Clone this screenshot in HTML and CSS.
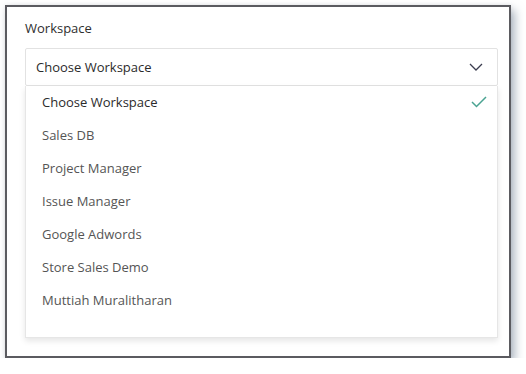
FILE: index.html
```html
<!DOCTYPE html>
<html lang="en">
<head>
    <meta charset="UTF-8">
    <title>Workspace</title>
    <link rel="stylesheet" href="styles.css">
</head>
<body>
    <div class="frame">
        <div class="field-label">Workspace</div>
        <div class="select">
            <span>Choose Workspace</span>
            <svg class="chevron" width="14" height="8" viewBox="0 0 14 8">
                <path d="M1 1 L7 7 L13 1" fill="none" stroke="#3b3d4f" stroke-width="1.3"/>
            </svg>
        </div>
        <ul class="options">
            <li class="selected">Choose Workspace
                <svg class="check" width="16" height="12" viewBox="0 0 16 12">
                    <path d="M1 6 L5.5 10.5 L15 1" fill="none" stroke="#4aa392" stroke-width="1.5"/>
                </svg>
            </li>
            <li>Sales DB</li>
            <li>Project Manager</li>
            <li>Issue Manager</li>
            <li>Google Adwords</li>
            <li>Store Sales Demo</li>
            <li>Muttiah Muralitharan</li>
        </ul>
    </div>
</body>
</html>
```

FILE: styles.css
```css
body {
    margin: 0;
    padding: 5px 0 0 5px;
    background-color: #fff;
    font-family: "Open Sans", Arial, sans-serif;
    font-size: 13px;
    color: #333;
}
.frame {
    height: 349px;
    width: 473px;
    border: 2px solid #5b5b60;
    box-shadow: 4px 5px 9px rgba(110, 125, 145, 0.55), 0 0 4px rgba(0, 0, 0, 0.08);
    padding: 0 11px 0 18px;
}
.field-label {
    margin-top: 10px;
    height: 22px;
    line-height: 22px;
    color: #2e2e2e;
}
.select {
    margin-top: 9px;
    height: 36px;
    border: 1px solid #e2e2e2;
    border-radius: 2px;
    display: flex;
    align-items: center;
    justify-content: space-between;
    padding: 0 14px 0 10px;
    color: #2b2b2b;
}
.options {
    list-style: none;
    margin: 0;
    padding: 0 0 20px;
    border: 1px solid #e6e6e6;
    border-top: none;
    box-shadow: 0 3px 6px rgba(0, 0, 0, 0.1);
}
.options li {
    height: 33px;
    line-height: 33px;
    padding: 0 10px 0 16px;
    color: #555;
    display: flex;
    align-items: center;
    justify-content: space-between;
}
.options li.selected {
    color: #2b2b2b;
}
.check {
    margin-top: -2px;
}
```
